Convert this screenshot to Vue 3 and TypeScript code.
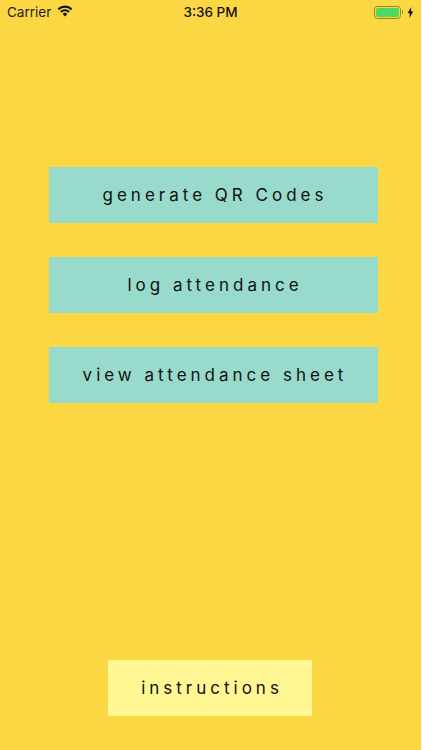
<script setup lang="ts">
const menu: string[] = ['generate QR Codes', 'log attendance', 'view attendance sheet']
</script>

<template>
  <div class="screen">
    <header class="status">
      <div class="left">
        <span class="carrier">Carrier</span>
        <svg class="wifi" viewBox="0 0 16 12" width="16" height="12">
          <path d="M8 11.5 5.6 8.9a3.4 3.4 0 0 1 4.8 0Z" fill="#111" />
          <path d="M4.5 7.7 3.2 6.3a6.9 6.9 0 0 1 9.6 0L11.5 7.7a5 5 0 0 0-7 0Z" fill="#111" />
          <path d="M2.1 5.2.6 3.6a10.6 10.6 0 0 1 14.8 0L13.9 5.2a8.5 8.5 0 0 0-11.8 0Z" fill="#111" />
        </svg>
      </div>
      <span class="time">3:36 PM</span>
      <div class="right">
        <span class="battery"><span class="level"></span></span>
        <span class="nub"></span>
        <svg class="bolt" viewBox="0 0 7 11" width="7" height="11">
          <path d="M4.2 0 .6 6.2h2.3L2.3 11l4-6.6H4Z" fill="#111" />
        </svg>
      </div>
    </header>

    <main class="menu">
      <button v-for="item in menu" :key="item" class="btn teal">{{ item }}</button>
    </main>

    <footer class="foot">
      <button class="btn yellow">instructions</button>
    </footer>
  </div>
</template>

<style>
html, body { margin: 0; background: #fffdf2; }
</style>

<style scoped>
.screen {
  width: 421px;
  height: 750px;
  background: #fcd744;
  display: flex;
  flex-direction: column;
  font-family: Inter, "Liberation Sans", sans-serif;
  color: #111;
  overflow: hidden;
}
.status {
  height: 24px;
  display: grid;
  grid-template-columns: 1fr auto 1fr;
  align-items: center;
  padding: 0 7px;
  font-size: 13.5px;
}
.left { display: flex; align-items: center; gap: 7px; }
.carrier { color: #222; }
.time { font-weight: 500; }
.wifi { margin-top: -2px; margin-left: -1px; }
.right { display: flex; align-items: center; justify-content: flex-end; }
.battery {
  box-sizing: border-box;
  width: 27px;
  height: 13px;
  border: 1px solid #8c8a2c;
  border-radius: 3.5px;
  padding: 1px;
  display: block;
}
.level { display: block; height: 100%; background: #4cd964; border-radius: 2px; }
.nub { width: 1.5px; height: 4px; background: #8c8a2c; margin-left: 1px; border-radius: 0 1px 1px 0; }
.bolt { margin-left: 4px; }
.menu {
  margin-top: 143px;
  padding-left: 49px;
  display: flex;
  flex-direction: column;
  align-items: flex-start;
  gap: 34px;
}
.foot {
  margin-top: auto;
  margin-bottom: 34px;
  padding-left: 108px;
}
.btn {
  display: block;
  border: 0;
  margin: 0;
  padding: 0 0 0 3px;
  height: 56px;
  font-family: inherit;
  font-size: 17px;
  letter-spacing: 4px;
  color: #111;
  text-align: center;
}
.teal { width: 329px; background: #98dacc; }
.yellow { width: 204px; background: #fef793; padding-left: 4px; }
</style>
